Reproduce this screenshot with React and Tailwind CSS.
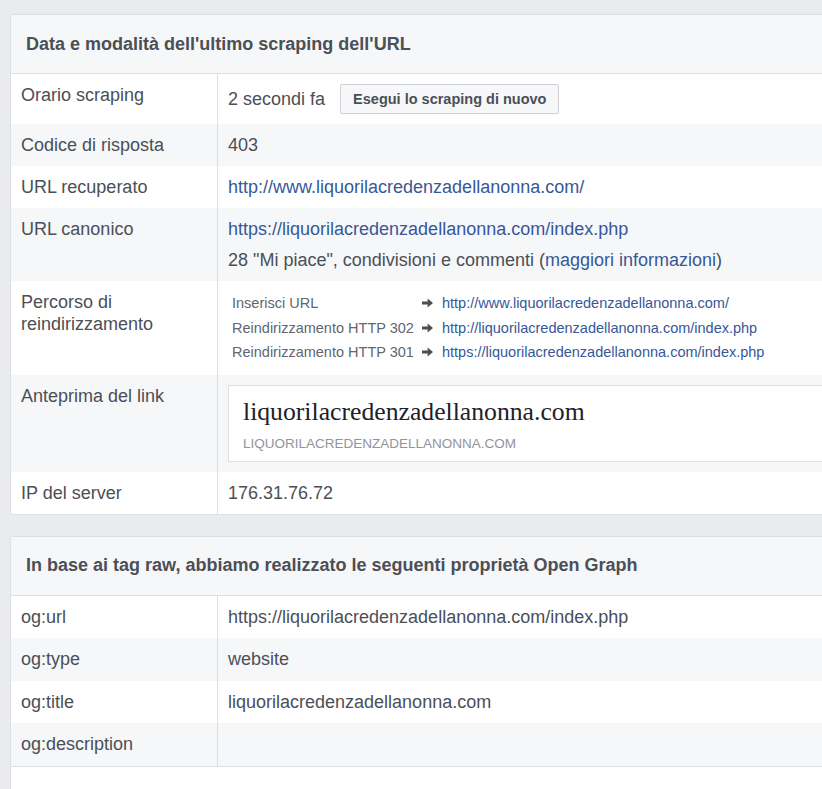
import React from 'react';

const Arrow = () => (
  <svg width="11" height="10" viewBox="0 0 11 10" className="shrink-0">
    <path d="M0 3.4h5.6V0.4L11 5 5.6 9.6V6.6H0z" fill="#4b4f56" />
  </svg>
);

const Row = ({ label, striped, children, className = '', lh = 'leading-[22px]' }) => (
  <div className={`flex ${striped ? 'bg-[#f6f7f9]' : 'bg-white'}`}>
    <div className={`w-[207px] shrink-0 border-r border-[#dddfe2] px-[10px] py-[10px] text-[18px] ${lh}`}>
      {label}
    </div>
    <div className={`flex-1 px-[10px] py-[10px] text-[18px] ${lh} ${className}`}>{children}</div>
  </div>
);

const Card = ({ title, children, className = '' }) => (
  <div className={`ml-[10px] w-[900px] overflow-hidden rounded-[3px] border border-[#dddfe2] bg-white ${className}`}>
    <div className="flex h-[59px] items-center border-b border-[#dddfe2] bg-[#f6f7f9] px-[15px] text-[18px] font-bold text-[#4b4f56]">
      {title}
    </div>
    {children}
  </div>
);

const redirects = [
  ['Inserisci URL', 'http://www.liquorilacredenzadellanonna.com/'],
  ['Reindirizzamento HTTP 302', 'http://liquorilacredenzadellanonna.com/index.php'],
  ['Reindirizzamento HTTP 301', 'https://liquorilacredenzadellanonna.com/index.php'],
];

export default function App() {
  return (
    <div className="h-screen w-full overflow-hidden bg-[#e9ebee] pt-[14px] font-['Liberation_Sans',Arial,sans-serif] text-[#4b4f56]">
      <Card title="Data e modalità dell'ultimo scraping dell'URL">
        <Row label="Orario scraping" className="flex items-center">
          <span className="mr-[15px]">2 secondi fa</span>
          <button className="h-[30px] rounded-[2px] border border-[#ced0d4] bg-[#f6f7f9] px-[12px] text-[14.5px] font-bold text-[#4b4f56]">
            Esegui lo scraping di nuovo
          </button>
        </Row>
        <Row label="Codice di risposta" striped>403</Row>
        <Row label="URL recuperato">
          <a className="text-[#365899]">http://www.liquorilacredenzadellanonna.com/</a>
        </Row>
        <Row label="URL canonico" striped>
          <div className="text-[#365899]">https://liquorilacredenzadellanonna.com/index.php</div>
          <div className="mt-[9px]">
            28 "Mi piace", condivisioni e commenti (<a className="text-[#365899]">maggiori informazioni</a>)
          </div>
        </Row>
        <Row label={<>Percorso di<br />reindirizzamento</>}>
          <div className="pl-[4px] text-[14.5px] leading-[24.5px]">
            {redirects.map(([l, u]) => (
              <div key={l} className="flex items-center">
                <span className="w-[190px] shrink-0 text-[#606770]">{l}</span>
                <Arrow />
                <a className="ml-[9px] text-[#365899]">{u}</a>
              </div>
            ))}
          </div>
        </Row>
        <Row label="Anteprima del link" striped>
          <div className="h-[77px] border border-[#dddfe2] bg-white px-[14px] pt-[11px]">
            <div className="font-['Liberation_Serif',serif] text-[25.7px] leading-[30px] text-[#1d2129]">
              liquorilacredenzadellanonna.com
            </div>
            <div className="mt-[8px] text-[13.5px] leading-[18px] text-[#90949c]">LIQUORILACREDENZADELLANONNA.COM</div>
          </div>
        </Row>
        <Row label="IP del server">176.31.76.72</Row>
      </Card>

      <Card title="In base ai tag raw, abbiamo realizzato le seguenti proprietà Open Graph" className="mt-[21px]">
        <Row label="og:url" lh="leading-[22.5px]">https://liquorilacredenzadellanonna.com/index.php</Row>
        <Row label="og:type" striped lh="leading-[22.5px]">website</Row>
        <Row label="og:title" lh="leading-[22.5px]">liquorilacredenzadellanonna.com</Row>
        <div className="border-b border-[#dddfe2]">
          <Row label="og:description" striped lh="leading-[22.5px]">{''}</Row>
        </div>
        <div className="h-[40px] bg-white" />
      </Card>
    </div>
  );
}
